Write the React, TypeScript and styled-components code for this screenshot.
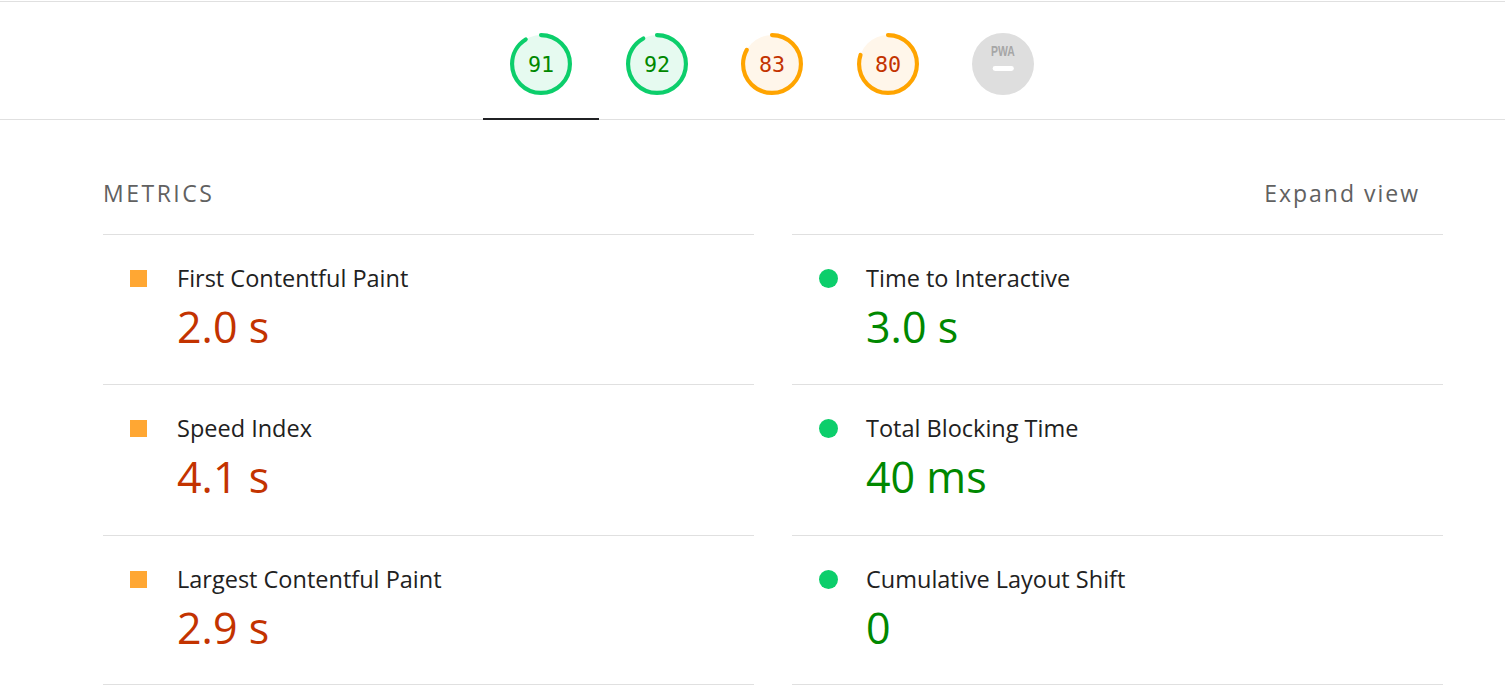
import styled, { createGlobalStyle } from 'styled-components';

const GlobalStyle = createGlobalStyle`
  body {
    margin: 0;
    background: #fff;
    font-family: 'Open Sans', 'Noto Sans', sans-serif;
  }
`;

const Page = styled.div`
  padding-top: 1px;
`;

const Header = styled.div`
  border-top: 1px solid #e0e0e0;
  border-bottom: 1px solid #e0e0e0;
`;

const Nav = styled.div`
  width: 1340px;
  margin-left: 102px;
  display: flex;
  justify-content: center;
`;

const Tab = styled.div<{ $active?: boolean }>`
  width: 115.5px;
  box-sizing: border-box;
  padding: 31px 0 23px;
  margin-bottom: -1px;
  display: flex;
  justify-content: center;
  border-bottom: 2px solid ${(p) => (p.$active ? '#202124' : 'transparent')};
`;

const GaugeSvg = styled.svg`
  width: 62px;
  height: 62px;
  display: block;
`;

const Content = styled.div`
  width: 1340px;
  margin-left: 103px;
`;

const SectionHead = styled.div`
  box-sizing: border-box;
  display: flex;
  justify-content: space-between;
  align-items: flex-start;
  height: 114px;
  padding-top: 58px;
  color: #616161;
  font-size: 23px;
  line-height: 30px;
`;

const SectionTitle = styled.div`
  letter-spacing: 2.5px;
`;

const ExpandLink = styled.div`
  letter-spacing: 2px;
  margin-right: 23px;
`;

const MetricGrid = styled.div`
  display: grid;
  grid-template-columns: 1fr 1fr;
  column-gap: 38px;
`;

const Metric = styled.div<{ $last?: boolean }>`
  box-sizing: border-box;
  height: 150.4px;
  border-top: 1px solid #e0e0e0;
  border-bottom: ${(p) => (p.$last ? '1px solid #e0e0e0' : 'none')};
  display: grid;
  grid-template-columns: 18px 1fr;
  column-gap: 29px;
  padding: 28px 0 0 27px;
`;

const Marker = styled.div<{ $pass?: boolean }>`
  width: ${(p) => (p.$pass ? '19px' : '17px')};
  height: ${(p) => (p.$pass ? '19px' : '17px')};
  margin-top: ${(p) => (p.$pass ? '6px' : '7px')};
  border-radius: ${(p) => (p.$pass ? '50%' : '0')};
  background: ${(p) => (p.$pass ? '#0cce6b' : '#ffa733')};
`;

const MetricText = styled.div`
  display: flex;
  flex-direction: column;
`;

const MetricTitle = styled.div`
  font-size: 23.5px;
  line-height: 30px;
  color: #212121;
`;

const MetricValue = styled.div<{ $pass?: boolean }>`
  margin-top: 7px;
  font-size: 43px;
  line-height: 54px;
  color: ${(p) => (p.$pass ? '#008800' : '#c33300')};
`;

type Score = { value: number | null };

const scores: Score[] = [{ value: 91 }, { value: 92 }, { value: 83 }, { value: 80 }, { value: null }];

function Gauge({ value }: Score) {
  if (value === null) {
    return (
      <GaugeSvg viewBox="0 0 120 120">
        <circle cx="60" cy="60" r="60" fill="#dedede" />
        <text
          x="60"
          y="44"
          textAnchor="middle"
          fontFamily="'Liberation Sans', sans-serif"
          fontWeight="700"
          fontSize="30"
          textLength="46"
          lengthAdjust="spacingAndGlyphs"
          fill="#a6a6a6"
        >
          PWA
        </text>
        <rect x="40" y="64" width="41" height="9.5" rx="4.75" fill="#fff" />
      </GaugeSvg>
    );
  }
  const pass = value >= 90;
  const color = pass ? '#0cce6b' : '#ffa400';
  const bg = pass ? '#e6faf0' : '#fff6ea';
  const text = pass ? '#008800' : '#c33300';
  const circ = 2 * Math.PI * 56;
  return (
    <GaugeSvg viewBox="0 0 120 120">
      <circle cx="60" cy="60" r="56" fill={bg} />
      <circle
        cx="60"
        cy="60"
        r="56"
        fill="none"
        stroke={color}
        strokeWidth="8"
        strokeLinecap="round"
        strokeDasharray={`${(value / 100) * circ} ${circ}`}
        transform="rotate(-90 60 60)"
      />
      <text
        x="60"
        y="75"
        textAnchor="middle"
        fontFamily="'DejaVu Sans Mono', monospace"
        fontSize="42"
        fill={text}
      >
        {value}
      </text>
    </GaugeSvg>
  );
}

const metrics = [
  { title: 'First Contentful Paint', value: '2.0 s', pass: false },
  { title: 'Time to Interactive', value: '3.0 s', pass: true },
  { title: 'Speed Index', value: '4.1 s', pass: false },
  { title: 'Total Blocking Time', value: '40 ms', pass: true },
  { title: 'Largest Contentful Paint', value: '2.9 s', pass: false },
  { title: 'Cumulative Layout Shift', value: '0', pass: true },
];

function App() {
  return (
    <Page>
      <GlobalStyle />
      <Header>
        <Nav>
          {scores.map((s, i) => (
            <Tab key={i} $active={i === 0}>
              <Gauge value={s.value} />
            </Tab>
          ))}
        </Nav>
      </Header>
      <Content>
        <SectionHead>
          <SectionTitle>METRICS</SectionTitle>
          <ExpandLink>Expand view</ExpandLink>
        </SectionHead>
        <MetricGrid>
          {metrics.map((m, i) => (
            <Metric key={m.title} $last={i >= 4}>
              <Marker $pass={m.pass} />
              <MetricText>
                <MetricTitle>{m.title}</MetricTitle>
                <MetricValue $pass={m.pass}>{m.value}</MetricValue>
              </MetricText>
            </Metric>
          ))}
        </MetricGrid>
      </Content>
    </Page>
  );
}

export default App;
